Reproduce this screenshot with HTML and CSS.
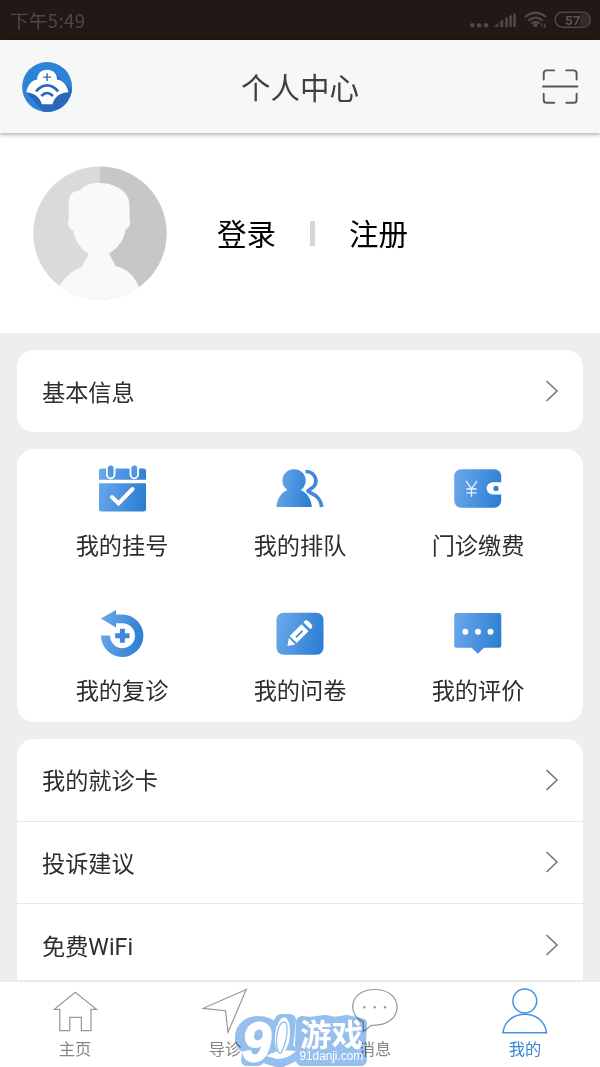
FILE: index.html
```html
<!DOCTYPE html>
<html lang="zh-CN">
<head>
<meta charset="utf-8">
<title>个人中心</title>
<link rel="stylesheet" href="styles.css">
</head>
<body>
<div class="app">
  <div class="status">
    <span class="time">下午5:49</span>
    <svg class="indicators" width="124" height="24" viewBox="468 8 124 24">
      <g fill="#514845">
        <circle cx="472.3" cy="25.3" r="2.3"/><circle cx="479.2" cy="25.3" r="2.3"/><circle cx="486.1" cy="25.3" r="2.3"/>
        <path d="M495 27v-1.500l3.500-2.500v4zM500.300 27v-6l3-1.500v7.500zM505.300 27v-9l2.500-1v10zM509.300 27v-11l2.500-1v12zM513.300 27v-13.500h2.500v13.500z"/>
        <circle cx="535.500" cy="25" r="2.300"/>
        <path d="M541 24.500l1.500-2v6zM546 26l-2 2.500v-6z"/>
      </g>
      <g fill="none" stroke="#514845" stroke-width="2.200">
        <path d="M525 17q10.500-8.500 21 0M528.300 20.700q7.200-6 14.400 0M531.300 23.700q4.200-3.600 8.400 0"/>
        <rect x="555.200" y="12.300" width="35" height="14.900" rx="7.400" stroke-width="1.500"/>
      </g>
      <path d="M580 14h3.500a5.700 5.700 0 0 1 0 11.400h-3.500z" fill="#362c29"/>
      <text x="572.800" y="24.700" class="battery">57</text>
    </svg>
  </div>
  <header class="header">
    <svg width="52" height="52" viewBox="20.500 60.500 52 52">
      <defs><clipPath id="disc"><circle cx="46.600" cy="86.500" r="25"/></clipPath></defs>
      <circle cx="46.600" cy="86.500" r="25" fill="#2f83d6"/>
      <path clip-path="url(#disc)" d="M55 74l22 20v25H50L26 92z" fill="#2968ba"/>
      <path d="M25.800 91.800C27 85 31 79.500 36.800 79C36.500 73 41 69.300 46.600 69.300S56.700 73 56.500 79C62.500 79.500 66.800 85 68 91.800C59.500 92 54 96.500 52 103.700H41.400C39 96.500 34 92.500 25.800 91.800z" fill="#fff"/>
      <path d="M46.600 72.700v7.800M42.700 76.600h7.800" stroke="#2968ba" stroke-width="1.400"/>
      <path d="M35.500 90.700q11-11.500 22.200 0M40.800 95.500q5.800-6 11.700 0" fill="none" stroke="#2968ba" stroke-width="2.700"/>
    </svg>
    <h1 class="title">个人中心</h1>
    <svg width="38" height="38" viewBox="541 68 38 38" fill="none" stroke="#5d5556" stroke-width="1.900" stroke-linecap="round">
      <path d="M543.700 79.500v-6.200q0-2.900 3-2.900h7.500M566.300 70.400h7.300q3 0 3 2.900v6.200M543.700 93.700v6.200q0 2.900 3 2.900h7.500M566.300 102.800h7.300q3 0 3-2.900v-6.200M543 86.500h34.500"/>
    </svg>
  </header>
  <section class="profile">
    <svg class="avatar" width="134" height="134" viewBox="33 166 134 134">
      <defs><clipPath id="face"><circle cx="100" cy="233.200" r="66.700"/></clipPath></defs>
      <g clip-path="url(#face)">
        <path d="M33 166h67v134H33z" fill="#d9dbda"/><path d="M100 166h67v134h-67z" fill="#c6c8c7"/>
        <path d="M88.500 254C80 248 74.500 240 73.500 230.500C67.500 229 67 222 69 218C68.500 206 67.500 196 73 192.500Q76 190 80 190.500C83 185.500 90 183 99 183C113 183 125 189 128.500 199Q130 204 129.500 219C131 224 129.500 228 125.500 230C124 240 117.500 249 109 253.500C111 258 114 261 115.500 266C127 269 134 275 139.500 288V304H59.500V286C65 277 71 271 82 267C83 262 87.500 260 88.500 254z" fill="#f8faf9"/>
      </g>
    </svg>
    <div class="account"><span class="label">登录</span><i class="bar"></i><span class="label">注册</span></div>
  </section>
  <main class="content">
    <svg class="defs" width="0" height="0"><defs>
      <linearGradient id="blue" x1="0" y1="0.400" x2="1" y2="0.600"><stop offset="0" stop-color="#69a6e9"/><stop offset="1" stop-color="#2b7fd3"/></linearGradient>
    </defs></svg>
    <div class="card row"><span class="label">基本信息</span><svg class="chevron" viewBox="0 0 14 24"><path d="M1.500 2l10.500 10L1.500 22"/></svg></div>
    <div class="card grid">
      <div class="cell">
        <svg class="icon" viewBox="97 464 50 50">
          <path d="M99 479.700V471q0-2.500 2.500-2.500h42q2.500 0 2.500 2.500v8.700zM99 483.200h47V509q0 2.500-2.500 2.500h-42q-2.500 0-2.500-2.500z" fill="url(#blue)"/>
          <g fill="none" stroke-linecap="round"><path d="M110.700 468v6.500M134.300 468v6.500" stroke="#fff" stroke-width="9.500"/><path d="M110.700 468.500v6M134.300 468.500v6" stroke="#5595dd" stroke-width="5.800"/><path d="M112 497l6.500 6.500L132.500 489" stroke="#fff" stroke-width="4"/></g>
        </svg><span>我的挂号</span></div>
      <div class="cell">
        <svg class="icon" viewBox="275 464 50 50">
          <path d="M294 469.300a11 11.300 0 0 1 6.800 20.700C307 493 311.500 499 311.800 507H276.500C276.800 499 281 493 287.300 490A11 11.300 0 0 1 294 469.300z" fill="url(#blue)"/>
          <path d="M305.500 471.500C315 471.500 321 483 310 489.300C307 491 307 491 310.500 492.700C318 496 321 500 321.700 507" fill="none" stroke="#4289da" stroke-width="3.700"/>
        </svg><span>我的排队</span></div>
      <div class="cell">
        <svg class="icon" viewBox="453 464 50 50">
          <rect x="454.200" y="469.200" width="47" height="38.500" rx="7" fill="url(#blue)"/>
          <path d="M502 482.200h-9.200a6.100 6.100 0 0 0 0 12.300h9.200z" fill="#fff"/><circle cx="496" cy="488.400" r="2.600" fill="#347fce"/>
          <path d="M466 480.800l5.500 8 5.500-8M471.500 488.800v8M466.300 489h10.400M466.300 492.800h10.400" fill="none" stroke="#eaf3fc" stroke-width="1.300"/>
        </svg><span>门诊缴费</span></div>
      <div class="cell">
        <svg class="icon" viewBox="97 609 50 50">
          <path d="M100.800 618.500L116 610v4.500h6.500a21.200 21.200 0 1 1-21.500 21h9a12.500 12.500 0 1 0 12.500-12.300H116v4.400z" fill="url(#blue)"/>
          <path d="M122.400 628.800v14M115.200 635.800h14.300" stroke="#3f87d9" stroke-width="5"/>
        </svg><span>我的复诊</span></div>
      <div class="cell">
        <svg class="icon" viewBox="275 609 50 50">
          <rect x="276.500" y="612.800" width="47" height="42" rx="7" fill="url(#blue)"/>
          <path d="M287.500 646l1.300-8 6.500 6.500zM289.700 636L301.500 624.200l7 7L296.700 643zM303.300 622.300l1.300-1.300q1.800-1.500 3.500 0l3.500 3.500q1.700 1.800 0 3.500l-1.300 1.300z" fill="#fff"/>
          <path d="M296 637.300l6.500-6.500" stroke="#468ddd" stroke-width="1.900"/>
        </svg><span>我的问卷</span></div>
      <div class="cell">
        <svg class="icon" viewBox="453 609 50 50">
          <path d="M456.500 613h42.500q2.300 0 2.300 2.300v30.200q0 2.300-2.300 2.300h-15l-6.200 6-6.200-6h-15.100q-2.300 0-2.300-2.300v-30.200q0-2.300 2.300-2.300z" fill="url(#blue)"/>
          <g fill="#fff"><circle cx="465.300" cy="631.800" r="3"/><circle cx="478" cy="631.800" r="3"/><circle cx="490.500" cy="631.800" r="3"/></g>
        </svg><span>我的评价</span></div>
    </div>
    <div class="card list">
      <div class="row"><span class="label">我的就诊卡</span><svg class="chevron" viewBox="0 0 14 24"><path d="M1.500 2l10.500 10L1.500 22"/></svg></div>
      <div class="row"><span class="label">投诉建议</span><svg class="chevron" viewBox="0 0 14 24"><path d="M1.500 2l10.500 10L1.500 22"/></svg></div>
      <div class="row"><span class="label">免费WiFi</span><svg class="chevron" viewBox="0 0 14 24"><path d="M1.500 2l10.500 10L1.500 22"/></svg></div>
    </div>
  </main>
  <nav class="tabs">
    <div class="tab"><svg class="tab-icon" viewBox="50 986 50 50"><path d="M75.300 992.300L54.300 1009.300h5.500v21.300h10v-13.300h11.600v13.300h9.600v-21.300h5.500z"/></svg><span>主页</span></div>
    <div class="tab"><svg class="tab-icon" viewBox="200 986 50 50"><path d="M246.300 989.500L203.300 1008.300l22.200 2.400 2.500 21.500z"/></svg><span>导诊</span></div>
    <div class="tab"><svg class="tab-icon" viewBox="350 986 50 50"><path d="M363.300 1031.500v-9.500C346 1014 350 989.500 374.500 989.500C390 989.500 397 998 397 1007.500C397 1018 387 1026 371.500 1025.300z"/><g class="dots"><circle cx="364.300" cy="1007.300" r="1.200"/><circle cx="374.700" cy="1007.300" r="1.200"/><circle cx="385" cy="1007.300" r="1.200"/></g></svg><span>消息</span></div>
    <div class="tab active"><svg class="tab-icon" viewBox="500 986 50 50"><circle cx="524.800" cy="1001" r="11.900"/><path d="M503 1032.700C506 1008 543.500 1008 546.600 1032.700z"/></svg><span>我的</span></div>
  </nav>
  <svg class="watermark halo" width="140" height="56" viewBox="231 1011 140 56">
    <path d="M258 1022C248 1022 241 1029 241 1037Q241 1046 249 1049L247 1060H258L268 1050L267 1058L280 1062L295 1055L287 1048L290 1020L281 1020L274 1032Q271 1022 258 1022z"/>
    <path d="M302 1022l8 1 15-2 10 2 12-2 14 3-1 20 1 16h-59l-1-15z"/>
  </svg>
  <svg class="watermark" width="140" height="56" viewBox="231 1011 140 56">
    <g class="mark">
      <text class="nine" x="242" y="1061" textLength="29" lengthAdjust="spacingAndGlyphs">9</text>
      <path d="M266 1056q12-7 30-5-8 8-19 8z"/>
      <ellipse cx="282.500" cy="1035.500" rx="7.500" ry="18" transform="rotate(6 282.500 1035.500)"/>
      <path class="stem" d="M279 1053C273 1040 279 1022 284 1022S288 1040 281 1053z"/>
      <text class="game" x="300" y="1046" textLength="63" lengthAdjust="spacingAndGlyphs">游戏</text>
      <text class="site" x="299.500" y="1060.300" textLength="63.500" lengthAdjust="spacingAndGlyphs">91danji.com</text>
    </g>
  </svg>
</div>
</body>
</html>
```
FILE: styles.css
```css
* { box-sizing: border-box; }
body {
  margin: 0;
  font-family: Roboto, "Noto Sans CJK SC", sans-serif;
  color: #2d2d2d;
}
svg { display: block; flex: none; }
.app {
  position: relative;
  width: 600px;
  height: 1067px;
  display: flex;
  flex-direction: column;
  overflow: hidden;
  background: #eee;
}
.status {
  flex: none;
  height: 40px;
  padding: 0 8px 0 10px;
  display: flex;
  align-items: center;
  justify-content: space-between;
  background: #231815;
  color: #514845;
}
.time { font-family: "Noto Sans CJK SC", sans-serif; font-size: 18.500px; line-height: 38px; letter-spacing: 0.400px; }
.battery { font: bold 13.500px Roboto, sans-serif; text-anchor: middle; fill: #5b5350; }
.header {
  flex: none;
  z-index: 1;
  height: 93px;
  padding: 0 21px;
  display: flex;
  align-items: center;
  justify-content: space-between;
  background: #f6f8f7;
  box-shadow: 0 1px 5px rgba(0, 0, 0, 0.4);
}
.title {
  margin: 0 0 0 -14px;
  padding-top: 4px;
  font-size: 29.500px;
  font-weight: 400;
  line-height: 44px;
  color: #443d3b;
}
.profile {
  flex: none;
  height: 200px;
  padding-left: 33px;
  display: flex;
  align-items: center;
  background: #fff;
}
.account {
  margin-left: 50px;
  display: flex;
  align-items: center;
  font-size: 29.500px;
  line-height: 44px;
  color: #000;
}
.account .label { padding-top: 4px; }
.bar { width: 5px; height: 25px; margin: 0 34px; background: #d6d6d6; }
.content {
  flex: 1;
  min-height: 0;
  overflow: hidden;
  padding: 17px 17px 0;
  display: flex;
  flex-direction: column;
  gap: 17px;
}
.defs { position: absolute; }
.card { flex: none; background: #fff; border-radius: 17px; }
.row {
  height: 82px;
  padding: 0 24px 0 25px;
  display: flex;
  align-items: center;
  justify-content: space-between;
  font-size: 23.200px;
  line-height: 36px;
}
.row .label { padding-top: 3px; }
.chevron { width: 14px; height: 24px; fill: none; stroke: #777; stroke-width: 1.600; }
.grid {
  height: 273px;
  padding: 0 16px;
  display: grid;
  grid-template-columns: repeat(3, 178px);
  grid-auto-rows: 145px;
}
.cell {
  padding-top: 15px;
  display: flex;
  flex-direction: column;
  align-items: center;
  gap: 16px;
  font-size: 23.200px;
  line-height: 32px;
}
.icon { width: 50px; height: 50px; }
.list { border-radius: 17px 17px 0 0; }
.list .row { height: 82.500px; border-bottom: 1px solid #e8e8e8; }
.list .row:last-child { border-bottom: 0; }
.tabs {
  flex: none;
  height: 87px;
  border-top: 2px solid #ebebeb;
  display: grid;
  grid-template-columns: repeat(4, 150px);
  background: #fff;
}
.tab {
  padding-top: 4px;
  display: flex;
  flex-direction: column;
  align-items: center;
  font-size: 16.300px;
  line-height: 28px;
  color: #858585;
}
.tab-icon { width: 50px; height: 50px; fill: none; stroke: #979797; stroke-width: 1.200; }
.dots { fill: #979797; stroke: none; }
.active { color: #3388dc; }
.active .tab-icon { stroke: #4493e2; stroke-width: 1.500; }
.watermark { position: absolute; left: 231px; top: 1011px; }
.halo {
  fill: #96bfee;
  stroke: #96bfee;
  stroke-width: 12px;
  stroke-linejoin: round;
  mix-blend-mode: multiply;
}
.mark { fill: #fff; }
.nine { font: italic bold 56px "Liberation Sans", sans-serif; stroke: #fff; stroke-width: 2px; }
.stem { stroke: #96bfee; stroke-width: 1.300px; }
.game { font: bold 31px "Noto Sans CJK SC", sans-serif; }
.site { font: 12px "Liberation Sans", sans-serif; }
```
